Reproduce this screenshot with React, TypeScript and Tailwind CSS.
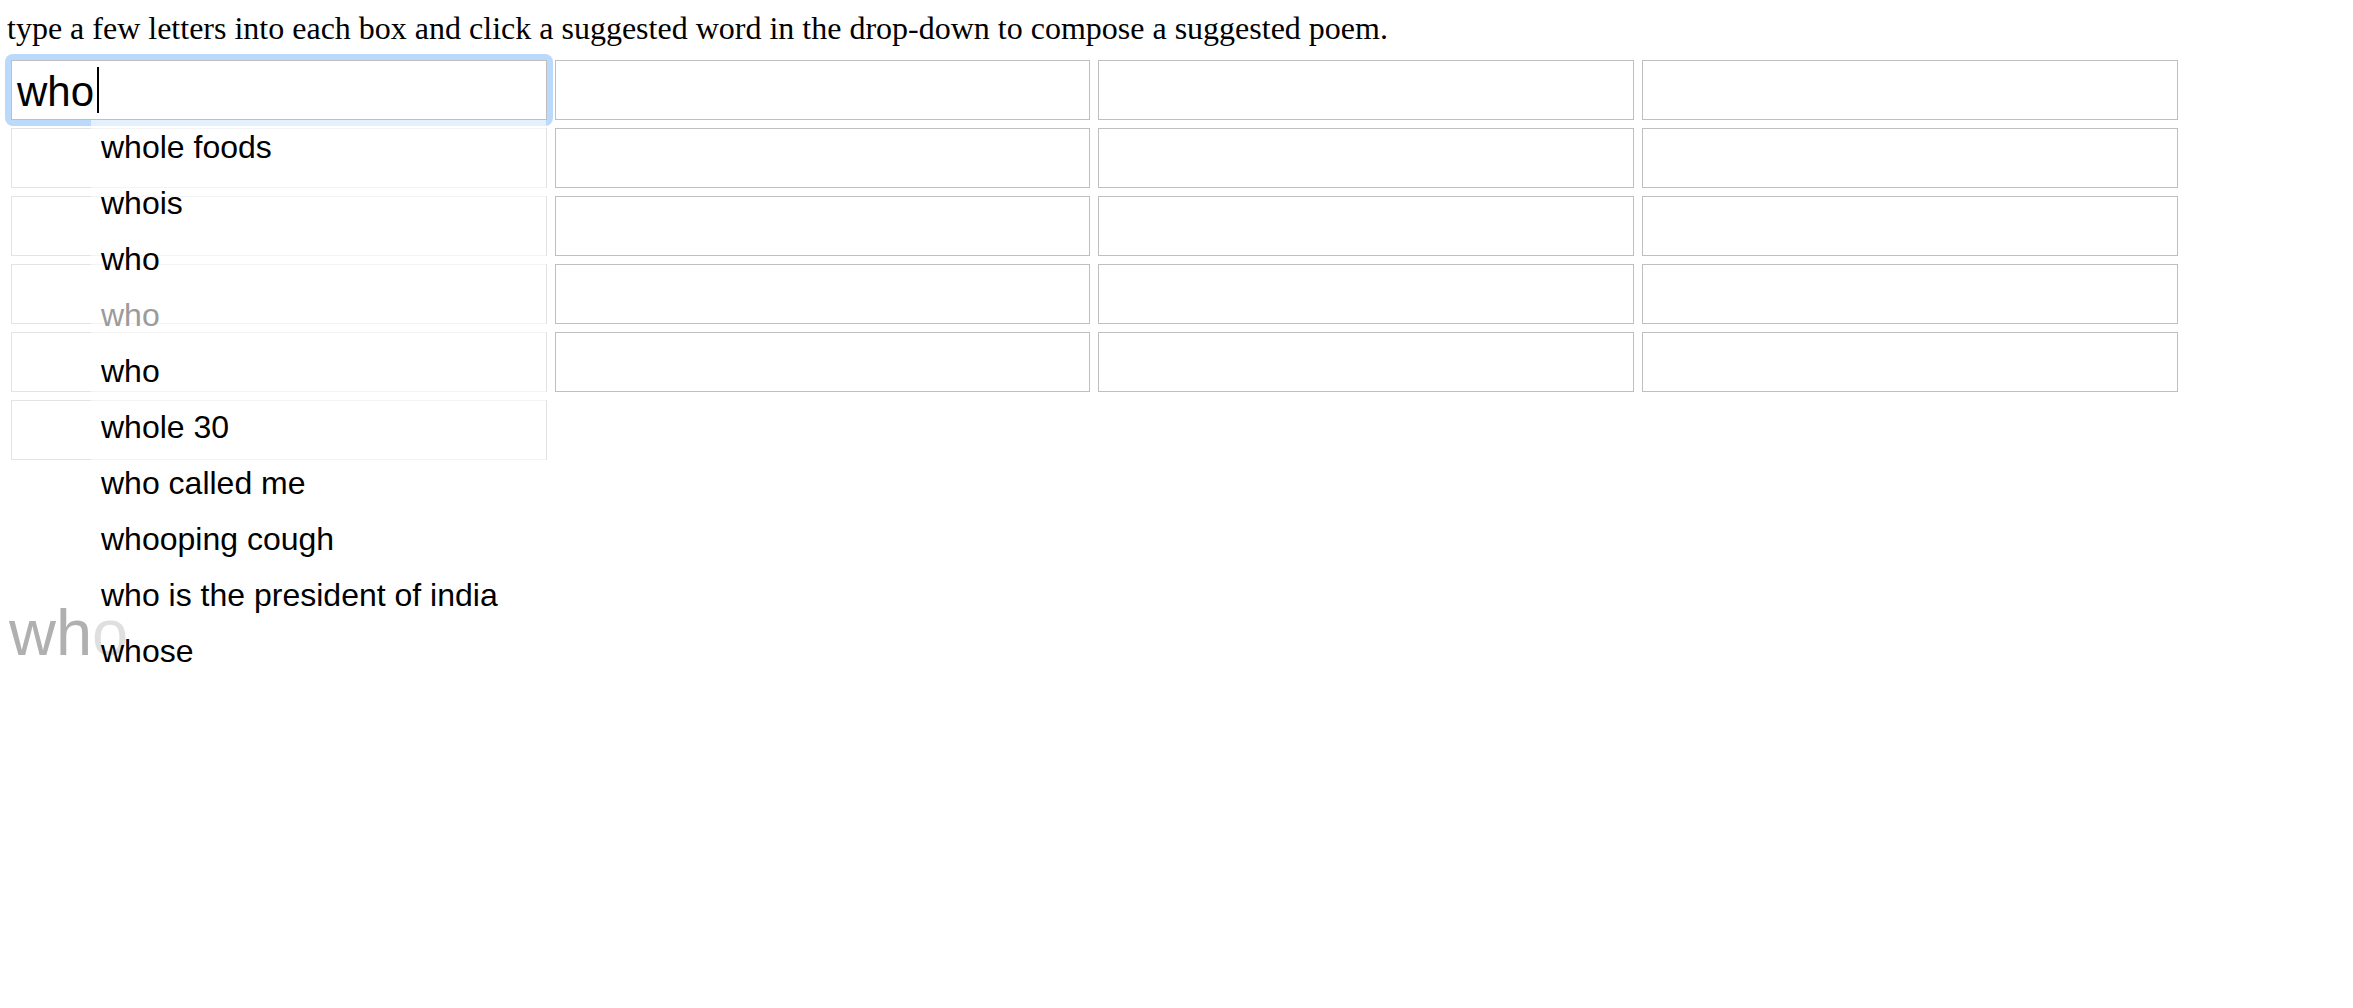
const suggestions = [
  { word: 'whole foods' },
  { word: 'whois' },
  { word: 'who' },
  { word: 'who', muted: true },
  { word: 'who' },
  { word: 'whole 30' },
  { word: 'who called me' },
  { word: 'whooping cough' },
  { word: 'who is the president of india' },
  { word: 'whose' },
];

const sans = "font-['Liberation_Sans',Arial,Helvetica,sans-serif]";

const Box = ({ faint }: { faint?: boolean }) => (
  <div
    className={
      faint
        ? 'h-[60px] w-full border border-[#e3e3e3] bg-white'
        : 'h-[60px] w-full border border-[#bfbfbf] bg-white'
    }
  />
);

const FirstColumn = () => {
  return (
    <div className="relative flex flex-col gap-[8px]">
      {/* focused box */}
      <div className="relative h-[60px]">
        <div className="absolute -inset-[6px] rounded-[8px] bg-[#bad9fb]" />
        <div
          className={`relative flex h-[60px] items-center border border-[#bfbfbf] bg-white pl-[5px] text-[42px] leading-[58px] text-black ${sans}`}
        >
          <span className="pt-[4px]">who</span>
          <span className="ml-[3px] h-[46px] w-[2px] bg-black" />
        </div>
      </div>
      <Box faint />
      <Box faint />
      <Box faint />
      <Box faint />
      <Box faint />

      {/* suggestion drop-down */}
      <ul
        className={`absolute left-[80px] top-[60px] z-20 w-[455px] bg-white/60 text-[32px] text-black ${sans}`}
      >
        {suggestions.map((s, i) => (
          <li
            key={i}
            className={`h-[56px] pl-[10px] leading-[55px] whitespace-nowrap ${s.muted ? 'text-[#9b9b9b]' : 'text-black'}`}
          >
            {s.word}
          </li>
        ))}
      </ul>
    </div>
  );
};

const Column = () => (
  <div className="flex flex-col gap-[8px]">
    {[0, 1, 2, 3, 4].map((i) => (
      <Box key={i} />
    ))}
  </div>
);

export default function App() {
  return (
    <div className="min-h-screen bg-white pl-[7px] pt-[10px] text-black">
      <p className="font-['Liberation_Serif','Times_New_Roman',serif] text-[32px] leading-[37px]">
        type a few letters into each box and click a suggested word in the drop-down to compose a suggested poem.
      </p>

      <div className="ml-[4px] mt-[13px] grid grid-cols-[repeat(4,535.67px)] items-start gap-x-[8px]">
        <FirstColumn />
        <Column />
        <Column />
        <Column />
      </div>

      <div className={`ml-[2px] mt-[134px] text-[65px] leading-[78px] text-[#b0b0b0] ${sans}`}>who</div>
    </div>
  );
}
